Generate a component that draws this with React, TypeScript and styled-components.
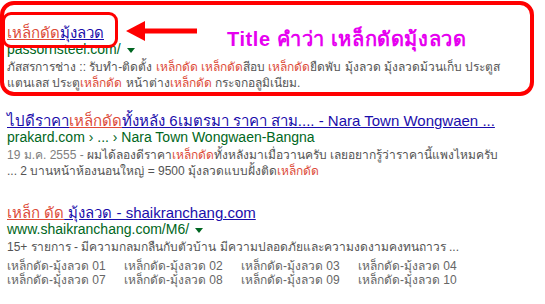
import styled, { createGlobalStyle } from "styled-components";

const GlobalStyle = createGlobalStyle`
  body {
    margin: 0;
    background: #fff;
    font-family: Arial, "Liberation Sans", Tahoma, sans-serif;
  }
`;

interface Part {
  text: string;
  hl?: boolean;
}

interface ResultData {
  title: Part[];
  url: string;
  arrow?: boolean;
  lines: Part[][];
  date?: string;
  sitelinks?: string[];
}

const results: ResultData[] = [
  {
    title: [{ text: "เหล็กดัด", hl: true }, { text: "มุ้งลวด" }],
    url: "passornsteel.com/",
    arrow: true,
    lines: [
      [
        { text: "ภัสสรการช่าง :: รับทำ-ติดตั้ง " },
        { text: "เหล็กดัด", hl: true },
        { text: " " },
        { text: "เหล็กดัด", hl: true },
        { text: "สีอบ " },
        { text: "เหล็กดัด", hl: true },
        { text: "ยืดพับ มุ้งลวด มุ้งลวดม้วนเก็บ ประตูส" },
      ],
      [
        { text: "แตนเลส ประตู" },
        { text: "เหล็กดัด", hl: true },
        { text: " หน้าต่าง" },
        { text: "เหล็กดัด", hl: true },
        { text: " กระจกอลูมิเนียม." },
      ],
    ],
  },
  {
    title: [
      { text: "ไปดีราคา" },
      { text: "เหล็กดัด", hl: true },
      { text: "ทั้งหลัง 6เมตรมา ราคา สาม.... - Nara Town Wongwaen ..." },
    ],
    url: "prakard.com › ... › Nara Town Wongwaen-Bangna",
    date: "19 ม.ค. 2555 - ",
    lines: [
      [
        { text: "ผมได้ลองดีราคา" },
        { text: "เหล็กดัด", hl: true },
        { text: "ทั้งหลังมาเมื่อวานครับ เลยอยากรู้ว่าราคานี้แพงไหมครับ" },
      ],
      [
        { text: "... 2 บานหน้าห้องนอนใหญ่ = 9500 มุ้งลวดแบบฝั้งติด" },
        { text: "เหล็กดัด", hl: true },
      ],
    ],
  },
  {
    title: [
      { text: "เหล็ก ดัด", hl: true },
      { text: " มุ้งลวด - shaikranchang.com" },
    ],
    url: "www.shaikranchang.com/M6/",
    arrow: true,
    lines: [
      [{ text: "15+ รายการ - มีความกลมกลืนกับตัวบ้าน มีความปลอดภัยและความงดงามคงทนถาวร ..." }],
    ],
    sitelinks: [
      "เหล็กดัด-มุ้งลวด 01",
      "เหล็กดัด-มุ้งลวด 02",
      "เหล็กดัด-มุ้งลวด 03",
      "เหล็กดัด-มุ้งลวด 04",
      "เหล็กดัด-มุ้งลวด 07",
      "เหล็กดัด-มุ้งลวด 08",
      "เหล็กดัด-มุ้งลวด 09",
      "เหล็กดัด-มุ้งลวด 10",
    ],
  },
];

const App = () => {
  return (
    <Page>
      <GlobalStyle />
      <ResultList>
        {results.map((r, i) => (
          <Result key={i} $sitelinks={!!r.sitelinks}>
            <Title>
              {r.title.map((p, j) => (
                <TitlePart key={j} $hl={p.hl}>{p.text}</TitlePart>
              ))}
            </Title>
            <Url>
              {r.url}
              {r.arrow && <DropArrow />}
            </Url>
            <Snippet>
              {r.lines.map((line, j) => (
                <div key={j}>
                  {j === 0 && r.date && <DateText>{r.date}</DateText>}
                  {line.map((p, k) =>
                    p.hl ? <Em key={k}>{p.text}</Em> : <span key={k}>{p.text}</span>
                  )}
                </div>
              ))}
            </Snippet>
            {r.sitelinks && (
              <Sitelinks>
                {r.sitelinks.map((s) => (
                  <Sitelink key={s}>{s}</Sitelink>
                ))}
              </Sitelinks>
            )}
          </Result>
        ))}
      </ResultList>

      <OuterMark />
      <InnerMark />
      <Arrow width="72" height="22" viewBox="0 0 72 22">
        <polygon points="0,11 19,1 19,21" fill="#ff0000" />
        <rect x="17" y="8.5" width="54" height="5" fill="#ff0000" />
      </Arrow>
      <Note>Title คำว่า เหล็กดัดมุ้งลวด</Note>
    </Page>
  );
};

export default App;

const Page = styled.div`
  position: relative;
  width: 545px;
  height: 304px;
  overflow: hidden;
  background: #fff;
`;

const ResultList = styled.div`
  display: flex;
  flex-direction: column;
  gap: 22px;
  padding: 25px 0 0 7px;
`;

const Result = styled.div<{ $sitelinks?: boolean }>`
  display: flex;
  flex-direction: column;
  margin-top: ${(p) => (p.$sitelinks ? 4 : 0)}px;
`;

const Title = styled.div`
  font-size: 15px;
  line-height: 16px;
  white-space: nowrap;
`;

const TitlePart = styled.span<{ $hl?: boolean }>`
  color: ${(p) => (p.$hl ? "#dd4b39" : "#1a0dab")};
  text-decoration: underline;
`;

const Url = styled.div`
  display: flex;
  align-items: center;
  gap: 6px;
  color: #006621;
  font-size: 14px;
  line-height: 17px;
  white-space: nowrap;
`;

const DropArrow = styled.span`
  width: 0;
  height: 0;
  border-left: 4px solid transparent;
  border-right: 4px solid transparent;
  border-top: 5px solid #006621;
  margin-top: 2px;
`;

const Snippet = styled.div`
  margin-top: 1px;
  color: #545454;
  font-size: 12px;
  line-height: 16px;
  white-space: nowrap;
`;

const DateText = styled.span`
  color: #808080;
`;

const Em = styled.span`
  color: #dd4b39;
`;

const Sitelinks = styled.div`
  display: grid;
  grid-template-columns: repeat(4, 117px);
  margin-top: 5px;
`;

const Sitelink = styled.span`
  color: #666;
  font-size: 12px;
  line-height: 13.5px;
  white-space: nowrap;
`;

const OuterMark = styled.div`
  position: absolute;
  left: 0;
  top: 1px;
  width: 526px;
  height: 87px;
  border: 4px solid #ff0000;
  border-radius: 14px;
`;

const InnerMark = styled.div`
  position: absolute;
  left: 2px;
  top: 12px;
  width: 110px;
  height: 30px;
  border: 3px solid #ff0000;
  border-radius: 9px;
`;

const Arrow = styled.svg`
  position: absolute;
  left: 126px;
  top: 20px;
`;

const Note = styled.div`
  position: absolute;
  left: 227px;
  top: 23px;
  color: #e600f0;
  font-size: 20px;
  letter-spacing: 0.6px;
  font-weight: bold;
  white-space: nowrap;
`;
